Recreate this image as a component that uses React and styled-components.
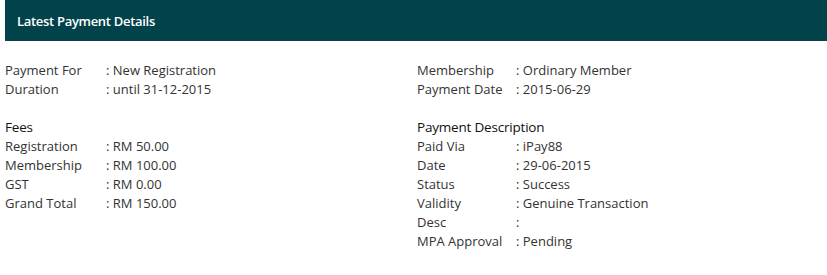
import React from 'react';
import styled, { createGlobalStyle } from 'styled-components';

const GlobalStyle = createGlobalStyle`
  body {
    margin: 0;
    background: #fff;
    font-family: "Open Sans", "Liberation Sans", sans-serif;
  }
`;

const Wrapper = styled.div`
  padding-left: 5px;
`;

const Header = styled.div`
  height: 41px;
  background-color: #02424b;
  color: #fff;
  font-size: 13px;
  font-weight: 600;
  display: flex;
  align-items: center;
  padding-left: 12px;
  letter-spacing: -0.3px;
`;

const Body = styled.div`
  display: grid;
  grid-template-columns: 412px 1fr;
  padding-top: 20px;
`;

const Column = styled.div`
  display: flex;
  flex-direction: column;
`;

const Section = styled.div`
  margin-bottom: 19px;
`;

const Title = styled.div`
  font-size: 13.5px;
  line-height: 19px;
  color: #111;
  letter-spacing: -0.2px;
`;

const Row = styled.div`
  display: grid;
  grid-template-columns: ${(p) => p.labelWidth || 101}px 1fr;
  font-size: 13px;
  line-height: 19px;
  color: #333;
  letter-spacing: 0;
`;

const Label = styled.span``;
const Value = styled.span``;

function Info({ rows, labelWidth }) {
  return rows.map(([label, value]) => (
    <Row key={label} labelWidth={labelWidth}>
      <Label>{label}</Label>
      <Value>: {value}</Value>
    </Row>
  ));
}

export default function App() {
  return (
    <Wrapper>
      <GlobalStyle />
      <Header>Latest Payment Details</Header>
      <Body>
        <Column>
          <Section>
            <Info rows={[['Payment For', 'New Registration'], ['Duration', 'until 31-12-2015']]} />
          </Section>
          <Section>
            <Title>Fees</Title>
            <Info
              rows={[
                ['Registration', 'RM 50.00'],
                ['Membership', 'RM 100.00'],
                ['GST', 'RM 0.00'],
                ['Grand Total', 'RM 150.00'],
              ]}
            />
          </Section>
        </Column>
        <Column>
          <Section>
            <Info labelWidth={99} rows={[['Membership', 'Ordinary Member'], ['Payment Date', '2015-06-29']]} />
          </Section>
          <Section>
            <Title>Payment Description</Title>
            <Info
              labelWidth={99}
              rows={[
                ['Paid Via', 'iPay88'],
                ['Date', '29-06-2015'],
                ['Status', 'Success'],
                ['Validity', 'Genuine Transaction'],
                ['Desc', ''],
                ['MPA Approval', 'Pending'],
              ]}
            />
          </Section>
        </Column>
      </Body>
    </Wrapper>
  );
}
